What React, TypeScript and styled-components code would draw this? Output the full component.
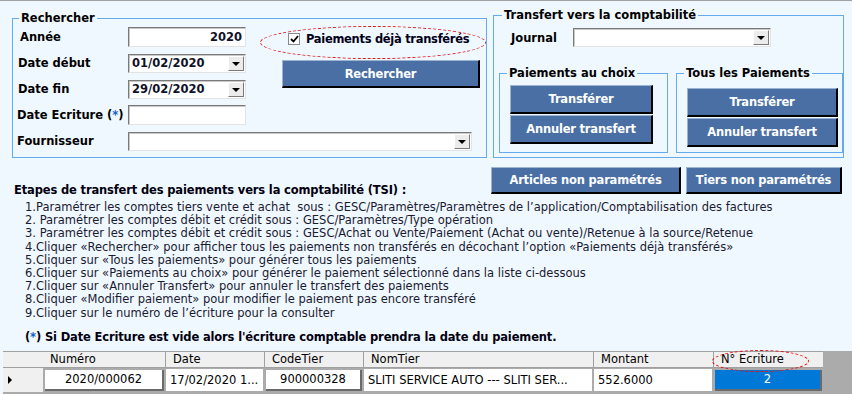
import React from 'react'
import styled, { createGlobalStyle } from 'styled-components'

const GlobalStyle = createGlobalStyle`
  html, body { margin: 0; padding: 0; }
  body {
    background: #f0f8ff;
    font-family: "DejaVu Sans", Verdana, sans-serif;
    font-size: 11.5px;
    color: #000;
  }
`

const Page = styled.div`
  position: relative;
  width: 852px;
  height: 394px;
  overflow: hidden;
  box-sizing: border-box;
  border-top: 1px solid #a0a0a0;
  background: #f0f8ff;
`

const TopRow = styled.div`
  display: flex;
  align-items: flex-start;
  gap: 6px;
  padding-left: 12px;
`

const GroupBox = styled.div<{ $w: number; $h: number; $top: number; $pad: string }>`
  position: relative;
  box-sizing: border-box;
  width: ${p => p.$w}px;
  height: ${p => p.$h}px;
  margin-top: ${p => p.$top}px;
  padding: ${p => p.$pad};
  border: 1px solid #66aaee;
  flex-shrink: 0;
`

const Caption = styled.span<{ $x: number }>`
  position: absolute;
  top: -8px;
  left: ${p => p.$x}px;
  padding: 0 2px;
  background: #f0f8ff;
  font-weight: bold;
  line-height: 14px;
  white-space: nowrap;
`

const SearchGrid = styled.div`
  display: grid;
  grid-template-columns: 111px 118px 36px 198px;
  grid-auto-rows: 20px;
  row-gap: 6px;
`

const Label = styled.div<{ $dx?: number }>`
  grid-column: 1;
  font-weight: bold;
  display: flex;
  align-items: center;
  white-space: nowrap;
  margin-left: ${p => p.$dx || 0}px;
`

const Star = styled.span`
  color: #1060d0;
`

const TextBox = styled.div<{ $align?: string }>`
  grid-column: 2;
  box-sizing: border-box;
  background: #fff;
  border: 1px solid;
  border-color: #7a7a7a #e3e3e3 #e3e3e3 #7a7a7a;
  box-shadow: inset 1px 1px 0 #c8c8c8;
  display: flex;
  align-items: center;
  justify-content: ${p => p.$align || 'flex-start'};
  padding: 0 3px;
  font-weight: bold;
  color: #101028;
`

const Combo = styled(TextBox)<{ $w?: number; $col?: string }>`
  ${p => (p.$w ? `width: ${p.$w}px;` : '')}
  ${p => (p.$col ? `grid-column: ${p.$col};` : '')}
  height: 19px;
  align-self: center;
  justify-content: space-between;
  padding: 0 1px 0 3px;
`

const DropButton = styled.span`
  box-sizing: border-box;
  width: 16px;
  height: 15px;
  background: #ececec;
  border: 1px solid;
  border-color: #fff #7a7a7a #7a7a7a #fff;
  display: flex;
  align-items: center;
  justify-content: center;
  &::after {
    content: '';
    border-left: 4px solid transparent;
    border-right: 4px solid transparent;
    border-top: 4px solid #000;
    margin-top: 1px;
  }
`

const CheckRow = styled.label`
  grid-column: 3 / 5;
  grid-row: 1;
  display: flex;
  align-items: center;
  gap: 6px;
  padding: 4px 0 0 42px;
  font-weight: bold;
  letter-spacing: -0.3px;
  color: #000018;
`

const CheckBox = styled.span`
  box-sizing: border-box;
  width: 12px;
  height: 12px;
  background: #fff;
  border: 1px solid #8a8a8a;
  display: flex;
  align-items: center;
  justify-content: center;
`

const BlueButton = styled.button<{ $w: number; $h?: number }>`
  box-sizing: border-box;
  width: ${p => p.$w}px;
  height: ${p => p.$h || 29}px;
  padding: 0;
  background: #4a6fa5;
  color: #fff;
  font-family: inherit;
  font-size: 11.5px;
  font-weight: bold;
  letter-spacing: -0.2px;
  border-style: solid;
  border-width: 1px 2px 2px 1px;
  border-color: #9cb3d4 #000 #000 #9cb3d4;
`

const SearchButton = styled(BlueButton)`
  grid-column: 4;
  grid-row: 2 / 4;
  margin-top: 7px;
`

const JournalRow = styled.div`
  display: flex;
  align-items: center;
  padding-left: 12px;
`

const JournalLabel = styled.div`
  width: 62px;
  font-weight: bold;
`

const SubGroups = styled.div`
  display: flex;
  gap: 8px;
  margin-top: 26px;
`

const ButtonStack = styled.div`
  display: flex;
  flex-direction: column;
  gap: 1px;
`

const ActionRow = styled.div`
  display: flex;
  justify-content: space-between;
  align-items: flex-start;
  padding: 0 10px 0 14px;
  margin-top: 9px;
`

const Heading = styled.div`
  margin-top: 17px;
  font-weight: bold;
  line-height: 13px;
  letter-spacing: -0.15px;
  color: #000010;
`

const ActionButtons = styled.div`
  display: flex;
  gap: 5px;
`

const Steps = styled.ol`
  list-style: none;
  margin: 4px 0 0;
  padding: 0 0 0 25px;
  line-height: 13.2px;
  color: #1a1a30;
  white-space: pre;
`

const Note = styled.div`
  margin: 11px 0 0 25px;
  font-weight: bold;
  line-height: 13px;
  letter-spacing: -0.15px;
  color: #000010;
`

const Grid = styled.div`
  margin: 7px 0 0 3px;
  height: 43px;
  background: #ababab;
`

const GridRow = styled.div<{ $h: number; $bg: string }>`
  display: grid;
  grid-template-columns: 40px 122px 99px 99px 230px 120px 110px;
  width: 820px;
  height: ${p => p.$h}px;
  background: ${p => p.$bg};
`

const HeadCell = styled.div<{ $sep?: boolean }>`
  display: flex;
  align-items: center;
  padding-left: 7px;
  border-top: 1px solid #a0a0a0;
  border-left: ${p => (p.$sep ? '1px solid #a0a0a0' : 'none')};
  border-bottom: 1px solid #a0a0a0;
  color: #000;
`

const RowHeader = styled.div`
  background: #f0f0f0;
  display: flex;
  align-items: center;
  padding-left: 5px;
  &::before {
    content: '';
    border-top: 4px solid transparent;
    border-bottom: 4px solid transparent;
    border-left: 4px solid #000;
  }
`

const Cell = styled.div<{ $align?: string; $kind?: 'raised' | 'selected' }>`
  box-sizing: border-box;
  display: flex;
  align-items: center;
  justify-content: ${p => p.$align || 'flex-start'};
  padding: 0 4px;
  margin: 1px 1px 1px 0;
  background: ${p => (p.$kind === 'selected' ? '#0078d7' : '#fff')};
  color: ${p => (p.$kind === 'selected' ? '#fff' : '#000')};
  border-left: 1px solid #ababab;
  ${p =>
    p.$kind
      ? `margin: 2px 1px 1px 2px; border: 1px solid; border-color: #fff #6a6a6a #6a6a6a #fff; border-width: 0 2px 2px 0;`
      : ''}
  white-space: nowrap;
  overflow: hidden;
`

const Ellipse = styled.div<{ $x: number; $y: number; $w: number; $h: number }>`
  position: absolute;
  left: ${p => p.$x}px;
  top: ${p => p.$y}px;
  width: ${p => p.$w}px;
  height: ${p => p.$h}px;
  border: 1px dashed #e01818;
  border-radius: 50%;
  pointer-events: none;
`

const steps = [
  '1.Paramétrer les comptes tiers vente et achat  sous : GESC/Paramètres/Paramètres de l’application/Comptabilisation des factures',
  '2. Paramétrer les comptes débit et crédit sous : GESC/Paramètres/Type opération',
  '3. Paramétrer les comptes débit et crédit sous : GESC/Achat ou Vente/Paiement (Achat ou vente)/Retenue à la source/Retenue',
  '4.Cliquer «Rechercher» pour afficher tous les paiements non transférés en décochant l’option «Paiements déjà transférés»',
  '5.Cliquer sur «Tous les paiements» pour générer tous les paiements',
  '6.Cliquer sur «Paiements au choix» pour générer le paiement sélectionné dans la liste ci-dessous',
  '7.Cliquer sur «Annuler Transfert» pour annuler le transfert des paiements',
  '8.Cliquer «Modifier paiement» pour modifier le paiement pas encore transféré',
  '9.Cliquer sur le numéro de l’écriture pour la consulter',
]

const Check = () => (
  <svg width="9" height="8" viewBox="0 0 9 8">
    <path d="M1 4 L3.5 6.5 L8 1" fill="none" stroke="#000" strokeWidth="1.8" />
  </svg>
)

const ComboBox: React.FC<{ value?: string; w?: number; col?: string }> = ({ value, w, col }) => (
  <Combo $w={w} $col={col}>
    <span>{value}</span>
    <DropButton />
  </Combo>
)

export default function App() {
  return (
    <>
      <GlobalStyle />
      <Page>
        <TopRow>
          <GroupBox $w={475} $h={140} $top={17} $pad="8px 0 0 4px">
            <Caption $x={6}>Rechercher</Caption>
            <SearchGrid>
              <Label $dx={3}>Année</Label>
              <TextBox $align="flex-end">2020</TextBox>
              <CheckRow>
                <CheckBox>
                  <Check />
                </CheckBox>
                Paiements déjà transférés
              </CheckRow>

              <Label $dx={1}>Date début</Label>
              <ComboBox value="01/02/2020" />
              <SearchButton $w={198} $h={28}>
                Rechercher
              </SearchButton>

              <Label $dx={1}>Date fin</Label>
              <ComboBox value="29/02/2020" />

              <Label>
                Date Ecriture (<Star>*</Star>)
              </Label>
              <TextBox />

              <Label>Fournisseur</Label>
              <ComboBox w={344} col="2 / 5" />
            </SearchGrid>
          </GroupBox>

          <GroupBox $w={351} $h={143} $top={14} $pad="12px 0 0 5px">
            <Caption $x={8}>Transfert vers la comptabilité</Caption>
            <JournalRow>
              <JournalLabel>Journal</JournalLabel>
              <ComboBox w={198} />
            </JournalRow>
            <SubGroups>
              <GroupBox $w={169} $h={80} $top={0} $pad="11px 0 0 10px">
                <Caption $x={7}>Paiements au choix</Caption>
                <ButtonStack>
                  <BlueButton $w={143}>Transférer</BlueButton>
                  <BlueButton $w={143}>Annuler transfert</BlueButton>
                </ButtonStack>
              </GroupBox>
              <GroupBox $w={167} $h={80} $top={0} $pad="14px 0 0 10px">
                <Caption $x={7}>Tous les Paiements</Caption>
                <ButtonStack>
                  <BlueButton $w={151}>Transférer</BlueButton>
                  <BlueButton $w={151}>Annuler transfert</BlueButton>
                </ButtonStack>
              </GroupBox>
            </SubGroups>
          </GroupBox>
        </TopRow>

        <ActionRow>
          <Heading>Etapes de transfert des paiements vers la comptabilité (TSI) :</Heading>
          <ActionButtons>
            <BlueButton $w={190} $h={27}>
              Articles non paramétrés
            </BlueButton>
            <BlueButton $w={156} $h={27}>
              Tiers non paramétrés
            </BlueButton>
          </ActionButtons>
        </ActionRow>

        <Steps>
          {steps.map(s => (
            <li key={s}>{s}</li>
          ))}
        </Steps>

        <Note>
          (<Star>*</Star>) Si Date Ecriture est vide alors l'écriture comptable prendra la date du paiement.
        </Note>

        <Grid>
          <GridRow $h={17} $bg="#f0f0f0">
            <HeadCell />
            <HeadCell>Numéro</HeadCell>
            <HeadCell $sep>Date</HeadCell>
            <HeadCell $sep>CodeTier</HeadCell>
            <HeadCell $sep>NomTier</HeadCell>
            <HeadCell $sep>Montant</HeadCell>
            <HeadCell $sep>N° Ecriture</HeadCell>
          </GridRow>
          <GridRow $h={24} $bg="#ababab">
            <RowHeader />
            <Cell $align="center" $kind="raised">2020/000062</Cell>
            <Cell>17/02/2020 1...</Cell>
            <Cell $align="center" $kind="raised">900000328</Cell>
            <Cell>SLITI SERVICE AUTO --- SLITI SER...</Cell>
            <Cell>552.6000</Cell>
            <Cell $align="center" $kind="selected">2</Cell>
          </GridRow>
        </Grid>

        <Ellipse $x={260} $y={25} $w={224} $h={31} />
        <Ellipse $x={712} $y={349} $w={95} $h={20} />
      </Page>
    </>
  )
}
